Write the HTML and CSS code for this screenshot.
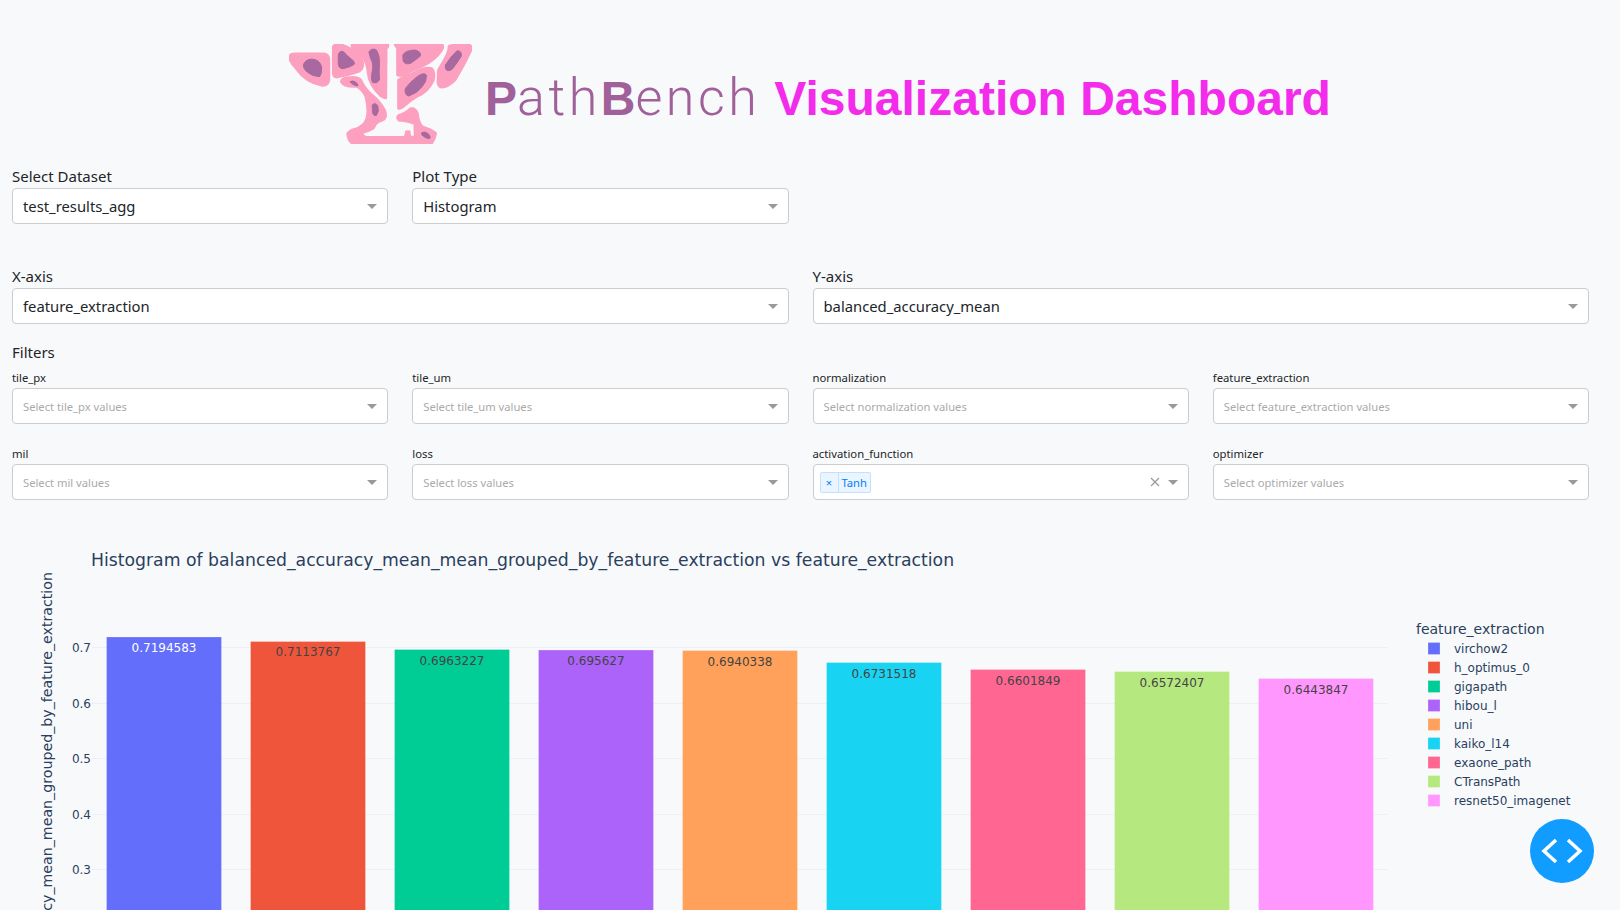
FILE: index.html
```html
<!DOCTYPE html>
<html lang="en">
<head>
  <meta charset="UTF-8">
  <title>PathBench Visualization Dashboard</title>
  <link rel="stylesheet" href="styles.css">
</head>
<body>
  <div class="header">
    <svg class="logo" viewBox="60 42 550 300" xmlns="http://www.w3.org/2000/svg">
      <g class="logo-body">
        <path d="M60 82 Q62 70 78 70 L165 70 Q180 72 181 88 L181 150 Q178 168 160 167 Q110 158 80 115 Q62 95 60 82Z"/>
        <path d="M192 50 Q195 42 210 42 Q225 44 245 55 Q272 72 282 95 Q286 115 270 125 Q240 135 205 142 Q193 143 192 130Z"/>
        <path d="M216 155 Q218 143 240 142 Q265 138 277 150 Q285 170 305 190 Q335 215 348 240 Q358 265 340 272 Q322 276 315 295 Q300 305 283 308 Q278 315 290 321 L408 321 L412 305 L422 304 L424 321 L438 320 L437 282 Q420 275 390 272 Q380 262 390 255 Q410 250 425 235 Q440 232 447 250 Q450 280 462 290 Q490 298 502 310 Q500 325 490 340 L250 341 Q238 335 235 312 Q240 302 255 298 Q285 290 293 265 Q300 240 290 200 Q280 178 262 170 Q225 172 216 155Z"/>
        <path d="M248 44 L358 44 Q360 50 353 56 L352 205 Q345 205 335 198 Q300 165 297 130 Q295 100 280 80 Q265 62 250 55Z"/>
        <path d="M378 44 L522 44 Q525 52 520 60 Q500 90 460 110 Q430 120 410 135 Q395 140 385 135 Q385 90 385 55Z"/>
        <path d="M388 150 Q400 140 430 130 Q470 108 490 115 Q500 125 495 150 Q480 185 445 200 Q420 215 405 230 Q392 240 388 235Z"/>
        <path d="M540 48 Q545 43 600 43 Q612 47 608 60 Q590 100 560 150 Q535 175 515 172 Q505 165 507 150 L508 120 Q520 100 528 85 Q540 65 540 48Z"/>
      </g>
      <g class="logo-spots">
        <path d="M103 105 Q108 88 128 87 Q152 88 158 110 Q160 130 152 140 Q130 140 112 124 Q103 115 103 105Z"/>
        <path d="M208 75 Q212 60 224 65 Q232 75 245 85 Q258 93 257 102 Q245 112 222 116 Q208 115 208 100Z"/>
        <path d="M243 155 Q252 150 260 156 Q268 162 267 168 Q255 168 243 155Z"/>
        <path d="M300 65 Q310 52 323 60 Q333 75 332 100 Q330 125 332 150 Q325 162 312 158 Q305 150 310 125 Q315 100 305 85Z"/>
        <path d="M310 225 Q320 216 327 228 Q332 245 322 257 Q312 258 311 245Z"/>
        <path d="M402 75 Q410 60 440 60 Q458 65 455 78 Q440 90 425 100 Q408 105 403 92Z"/>
        <path d="M410 175 Q425 155 445 140 Q465 125 473 135 Q475 155 460 170 Q445 190 420 198 Q405 195 410 175Z"/>
        <path d="M530 105 Q545 80 565 62 Q580 62 578 78 Q565 100 550 118 Q535 127 530 115Z"/>
        <path d="M459 308 Q468 303 478 311 Q487 320 483 326 Q470 326 459 315Z"/>
      </g>
    </svg>
    <h1 class="title">
      <span class="brand"><b>P</b>ath<b>B</b>ench</span>
      <span class="title-main">Visualization Dashboard</span>
    </h1>
  </div>

  <div class="controls">
    <div class="row row-top">
      <div class="field">
        <label>Select Dataset</label>
        <div class="dropdown"><span class="value">test_results_agg</span><span class="caret"></span></div>
      </div>
      <div class="field">
        <label>Plot Type</label>
        <div class="dropdown"><span class="value">Histogram</span><span class="caret"></span></div>
      </div>
    </div>

    <div class="row row-axes">
      <div class="field wide">
        <label>X-axis</label>
        <div class="dropdown"><span class="value">feature_extraction</span><span class="caret"></span></div>
      </div>
      <div class="field wide">
        <label>Y-axis</label>
        <div class="dropdown"><span class="value">balanced_accuracy_mean</span><span class="caret"></span></div>
      </div>
    </div>

    <div class="filters-title">Filters</div>
    <div class="row filters">
      <div class="field small">
        <label>tile_px</label>
        <div class="dropdown"><span class="placeholder">Select tile_px values</span><span class="caret"></span></div>
      </div>
      <div class="field small">
        <label>tile_um</label>
        <div class="dropdown"><span class="placeholder">Select tile_um values</span><span class="caret"></span></div>
      </div>
      <div class="field small">
        <label>normalization</label>
        <div class="dropdown"><span class="placeholder">Select normalization values</span><span class="caret"></span></div>
      </div>
      <div class="field small">
        <label>feature_extraction</label>
        <div class="dropdown"><span class="placeholder">Select feature_extraction values</span><span class="caret"></span></div>
      </div>
      <div class="field small">
        <label>mil</label>
        <div class="dropdown"><span class="placeholder">Select mil values</span><span class="caret"></span></div>
      </div>
      <div class="field small">
        <label>loss</label>
        <div class="dropdown"><span class="placeholder">Select loss values</span><span class="caret"></span></div>
      </div>
      <div class="field small">
        <label>activation_function</label>
        <div class="dropdown tagged">
          <span class="tag"><span class="tag-x">×</span><span class="tag-label">Tanh</span></span>
          <svg class="clear" width="10" height="10" viewBox="0 0 10 10"><path d="M1 1 L9 9 M9 1 L1 9"/></svg>
          <span class="caret"></span>
        </div>
      </div>
      <div class="field small">
        <label>optimizer</label>
        <div class="dropdown"><span class="placeholder">Select optimizer values</span><span class="caret"></span></div>
      </div>
    </div>
  </div>

  <svg class="chart" viewBox="0 530 1620 380" xmlns="http://www.w3.org/2000/svg">
    <text class="chart-title" x="91" y="566">Histogram of balanced_accuracy_mean_mean_grouped_by_feature_extraction vs feature_extraction</text>
    <text class="axis-title" transform="translate(52 572) rotate(-90)" text-anchor="end">balanced_accuracy_mean_mean_grouped_by_feature_extraction</text>

    <g class="grid">
      <path d="M92 647.5 H1388"/>
      <path d="M92 703.5 H1388"/>
      <path d="M92 758.5 H1388"/>
      <path d="M92 814.5 H1388"/>
      <path d="M92 869.5 H1388"/>
    </g>
    <g class="tick" text-anchor="end">
      <text x="91" y="652">0.7</text>
      <text x="91" y="708">0.6</text>
      <text x="91" y="763">0.5</text>
      <text x="91" y="819">0.4</text>
      <text x="91" y="874">0.3</text>
    </g>

    <g class="bars">
      <rect x="106.5" y="637" width="115" height="280" fill="#636efa"/>
      <rect x="250.5" y="641.5" width="115" height="280" fill="#ef553b"/>
      <rect x="394.5" y="649.5" width="115" height="280" fill="#00cc96"/>
      <rect x="538.5" y="650" width="115" height="280" fill="#ab63fa"/>
      <rect x="682.5" y="650.5" width="115" height="280" fill="#ffa15a"/>
      <rect x="826.5" y="662.5" width="115" height="280" fill="#19d3f3"/>
      <rect x="970.5" y="669.5" width="115" height="280" fill="#ff6692"/>
      <rect x="1114.5" y="671.5" width="115" height="280" fill="#b6e880"/>
      <rect x="1258.5" y="678.5" width="115" height="280" fill="#ff97ff"/>
    </g>
    <g class="bar-label" text-anchor="middle">
      <text class="light" x="164" y="652">0.7194583</text>
      <text x="308" y="656">0.7113767</text>
      <text x="452" y="665">0.6963227</text>
      <text x="596" y="665">0.695627</text>
      <text x="740" y="666">0.6940338</text>
      <text x="884" y="678">0.6731518</text>
      <text x="1028" y="685">0.6601849</text>
      <text x="1172" y="687">0.6572407</text>
      <text x="1316" y="694">0.6443847</text>
    </g>

    <text class="legend-title" x="1416" y="634">feature_extraction</text>
    <g class="legend">
      <rect x="1428" y="642.5" width="12" height="12" fill="#636efa"/><text x="1454" y="653">virchow2</text>
      <rect x="1428" y="661.5" width="12" height="12" fill="#ef553b"/><text x="1454" y="672">h_optimus_0</text>
      <rect x="1428" y="680.5" width="12" height="12" fill="#00cc96"/><text x="1454" y="691">gigapath</text>
      <rect x="1428" y="699.5" width="12" height="12" fill="#ab63fa"/><text x="1454" y="710">hibou_l</text>
      <rect x="1428" y="718.5" width="12" height="12" fill="#ffa15a"/><text x="1454" y="729">uni</text>
      <rect x="1428" y="737.5" width="12" height="12" fill="#19d3f3"/><text x="1454" y="748">kaiko_l14</text>
      <rect x="1428" y="756.5" width="12" height="12" fill="#ff6692"/><text x="1454" y="767">exaone_path</text>
      <rect x="1428" y="775.5" width="12" height="12" fill="#b6e880"/><text x="1454" y="786">CTransPath</text>
      <rect x="1428" y="794.5" width="12" height="12" fill="#ff97ff"/><text x="1454" y="805">resnet50_imagenet</text>
    </g>
  </svg>

  <div class="debug-btn">
    <svg width="42" height="24" viewBox="0 0 42 24"><path d="M15 1 L3 12 L15 23 M27 1 L39 12 L27 23"/></svg>
  </div>
</body>
</html>
```

FILE: styles.css
```css
html, body {
  margin: 0;
  padding: 0;
}

body {
  background: #f8f9fa;
  color: #212529;
  font-family: "Noto Sans", "Open Sans", sans-serif;
  overflow: hidden;
}

.header {
  display: flex;
  align-items: center;
  justify-content: center;
  gap: 13px;
  height: 100px;
  padding-top: 44px;
  margin-bottom: 20px;
}

.logo {
  width: 183px;
  height: 100px;
}

.logo-body path {
  fill: #fda0c0;
  stroke: #fda0c0;
  stroke-width: 6;
  stroke-linejoin: round;
}

.logo-spots path {
  fill: #a7699f;
  stroke: #a7699f;
  stroke-width: 3;
  stroke-linejoin: round;
}

.title {
  display: flex;
  align-items: baseline;
  gap: 14px;
  margin: 8px 0 0;
  font-family: "Liberation Sans", Arial, sans-serif;
  font-size: 48px;
  font-weight: 700;
  line-height: 1;
}

.brand {
  color: #a0609a;
  font-family: Roboto, sans-serif;
  font-size: 52px;
  font-weight: 300;
  letter-spacing: 3.5px;
}

.brand b {
  font-family: "Liberation Sans", Arial, sans-serif;
  font-size: 48px;
  font-weight: 700;
  letter-spacing: 0;
}

.title-main {
  color: #f32bea;
}

.controls {
  padding: 0 31px 0 12px;
}

.row {
  display: grid;
  grid-template-columns: repeat(4, 1fr);
  column-gap: 24px;
}

.row-top {
  margin-bottom: 40px;
}

.row-axes {
  margin-bottom: 16px;
}

.field.wide {
  grid-column: span 2;
}

.field label {
  display: block;
  font-size: 15px;
  line-height: 24px;
}

.field.small label {
  font-size: 11.3px;
  line-height: 16px;
  margin-bottom: 2px;
}

.filters {
  row-gap: 22px;
}

.filters-title {
  font-size: 15px;
  line-height: 24px;
  margin-bottom: 6px;
}

.dropdown {
  display: flex;
  align-items: center;
  box-sizing: border-box;
  height: 36px;
  padding: 0 10px;
  background: white;
  border: 1px solid #ccc;
  border-radius: 4px;
}

.value {
  flex: 1;
  font-size: 14.8px;
}

.placeholder {
  flex: 1;
  color: #aaa;
  font-size: 11.2px;
}

.caret {
  width: 0;
  height: 0;
  border-style: solid;
  border-width: 5px 5px 0;
  border-color: #999 transparent transparent;
}

.dropdown.tagged {
  padding-left: 6px;
}

.tag {
  display: flex;
  height: 21px;
  box-sizing: border-box;
  margin-right: auto;
  background: #ebf5ff;
  border: 1px solid #c2e0ff;
  border-radius: 2px;
  color: #007eff;
  font-size: 11.2px;
  line-height: 19px;
}

.tag-x {
  width: 17px;
  text-align: center;
  border-right: 1px solid #c2e0ff;
}

.tag-label {
  padding: 0 3px;
}

.clear {
  margin-right: 8px;
}

.clear path {
  fill: none;
  stroke: #999;
  stroke-width: 1.2;
}

.chart {
  display: block;
  width: 1620px;
  height: 380px;
  margin-top: 30px;
  font-family: "DejaVu Sans", Verdana, sans-serif;
}

.chart-title {
  fill: #2a3f5f;
  font-size: 17.25px;
}

.axis-title {
  fill: #2a3f5f;
  font-size: 14.2px;
}

.grid path {
  fill: none;
  stroke: #ebf0f8;
  stroke-width: 1;
}

.tick text {
  fill: #2a3f5f;
  font-size: 12px;
}

.bars rect {
  stroke: rgba(255, 255, 255, 0.25);
  stroke-width: 1;
}

.bar-label text {
  fill: #444;
  font-size: 12px;
}

.bar-label text.light {
  fill: white;
}

.legend-title {
  fill: #2a3f5f;
  font-size: 14px;
}

.legend text {
  fill: #2a3f5f;
  font-size: 12px;
}

.legend rect {
  stroke: rgba(255, 255, 255, 0.25);
  stroke-width: 1;
}

.debug-btn {
  position: fixed;
  right: 26px;
  bottom: 27px;
  width: 64px;
  height: 64px;
  display: flex;
  align-items: center;
  justify-content: center;
  background: #119dff;
  border-radius: 50%;
}

.debug-btn path {
  fill: none;
  stroke: white;
  stroke-width: 3.5;
}
```
